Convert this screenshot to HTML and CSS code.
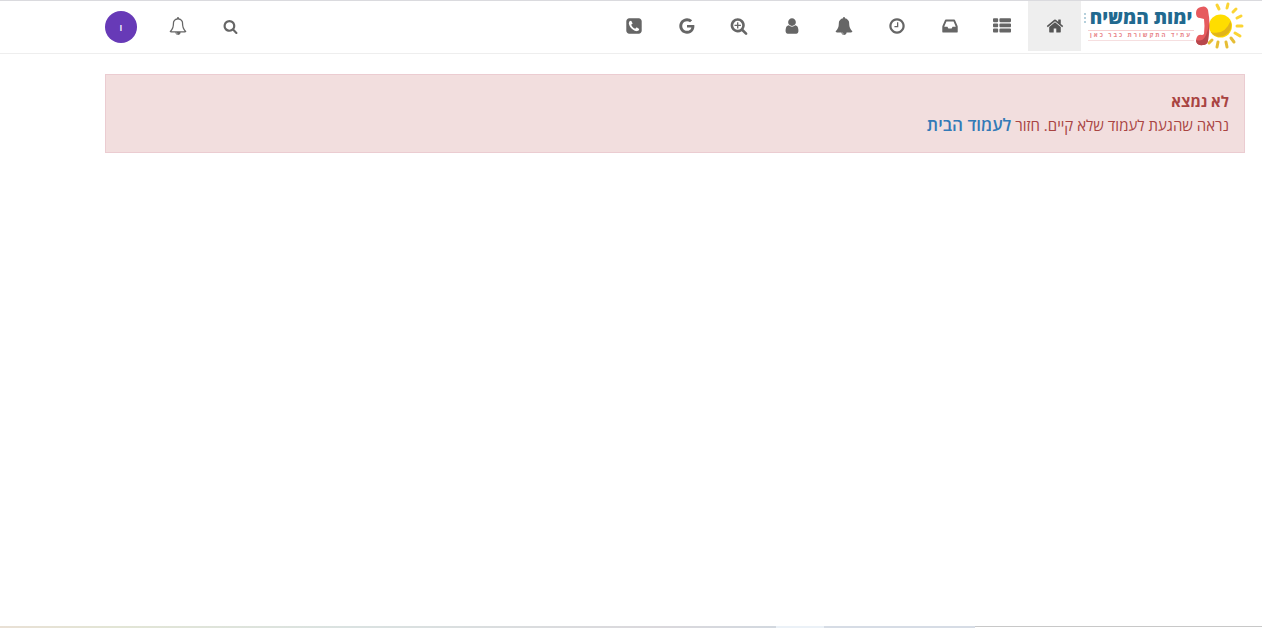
FILE: index.html
```html
<!DOCTYPE html>
<html lang="he" dir="rtl">
<head>
  <meta charset="UTF-8">
  <meta name="viewport" content="width=device-width, initial-scale=1.0">
  <title>לא נמצא</title>
  <link rel="stylesheet" href="styles.css">
</head>
<body>
  <header class="navbar">
    <a class="brand" href="#">
      <svg class="brand-mark" viewBox="0 0 50 50" aria-hidden="true">
        <!-- Sun -->
        <circle cx="25.500" cy="25" r="11.500" fill="#fd0"/>
        <path d="M35.500 20a11.500 11.500 0 0 1-20 11q14 4 20-11z" fill="#e2b51a"/>
        <g stroke="#fbd433" stroke-width="3" stroke-linecap="round">
          <path d="M22 4l2 4M33 3l-1 4M41 8l-3 3M46 15l-4 2M42 25h5M40 32l5 3"/>
          <path d="M36 37l3 4M31 41l1 5M23 41l-1 5M17 39l-3 3" stroke="#e6bd35"/>
        </g>
        <!-- Handset -->
        <path d="M6 6q5-2 7 3c2 10 2 21 0 31q-1 4-5 4-7 1-7-5 1-6 6-5 1 0 2-1 1-8 0-15l-4-1q-4 0-4-5 0-5 5-6z" fill="#e65a5e"/>
        <path d="M14 22q0 9-1 18-1 4-5 4-7 1-7-5 6 2 9-3 3-5 4-14z" fill="#b7474c"/>
      </svg>
      <span class="brand-text">
        <span class="brand-name">ימות המשיח</span>
        <span class="brand-tagline">עתיד התקשורת כבר כאן</span>
      </span>
      <svg class="brand-side" viewBox="0 0 3 12" aria-hidden="true">
        <path d="M1 1v2M1 5v2M1 9v2" stroke="#b5d0dc" stroke-width="2"/>
      </svg>
    </a>

    <nav class="main-nav">
      <a class="nav-link active" href="#" aria-label="בית">
        <svg class="icon" viewBox="0 0 1792 1792"><path d="M1472 992v480q0 26-19 45t-45 19h-384v-384h-256v384h-384q-26 0-45-19t-19-45v-480q0-1 .5-3t.5-3l575-474 575 474q1 2 1 6zm223-69l-62 74q-8 9-21 11h-3q-13 0-21-7l-692-577-692 577q-12 8-24 7-13-2-21-11l-62-74q-8-10-7-23.5t11-21.5l719-599q32-26 76-26t76 26l244 204v-195q0-14 9-23t23-9h192q14 0 23 9t9 23v408l219 182q10 8 11 21.5t-7 23.5z"/></svg>
      </a>
      <a class="nav-link" href="#" aria-label="קטגוריות">
        <svg class="icon" viewBox="0 0 1792 1792"><path d="M512 1248v192q0 40-28 68t-68 28h-320q-40 0-68-28t-28-68v-192q0-40 28-68t68-28h320q40 0 68 28t28 68zm0-512v192q0 40-28 68t-68 28h-320q-40 0-68-28t-28-68v-192q0-40 28-68t68-28h320q40 0 68 28t28 68zm1280 512v192q0 40-28 68t-68 28h-960q-40 0-68-28t-28-68v-192q0-40 28-68t68-28h960q40 0 68 28t28 68zm-1280-1024v192q0 40-28 68t-68 28h-320q-40 0-68-28t-28-68v-192q0-40 28-68t68-28h320q40 0 68 28t28 68zm1280 512v192q0 40-28 68t-68 28h-960q-40 0-68-28t-28-68v-192q0-40 28-68t68-28h960q40 0 68 28t28 68zm0-512v192q0 40-28 68t-68 28h-960q-40 0-68-28t-28-68v-192q0-40 28-68t68-28h960q40 0 68 28t28 68z"/></svg>
      </a>
      <a class="nav-link" href="#" aria-label="לא נקראו">
        <svg class="icon" viewBox="0 0 1792 1792"><path d="M1151 960h316q-1-3-2.5-8.5t-2.5-7.5l-212-496h-708l-212 496q-1 3-2.5 8.5t-2.5 7.5h316l95 192h320zm513 30v482q0 26-19 45t-45 19h-1408q-26 0-45-19t-19-45v-482q0-62 25-123l238-552q10-25 36.5-42t52.5-17h832q26 0 52.5 17t36.5 42l238 552q25 61 25 123z"/></svg>
      </a>
      <a class="nav-link" href="#" aria-label="פוסטים אחרונים">
        <svg class="icon" viewBox="0 0 1792 1792"><path d="M1024 544v448q0 14-9 23t-23 9h-320q-14 0-23-9t-9-23v-64q0-14 9-23t23-9h224v-352q0-14 9-23t23-9h64q14 0 23 9t9 23zm416 352q0-148-73-273t-198-198-273-73-273 73-198 198-73 273 73 273 198 198 273 73 273-73 198-198 73-273zm224 0q0 209-103 385.5t-279.5 279.5-385.5 103-385.5-103-279.5-279.5-103-385.5 103-385.5 279.5-279.5 385.5-103 385.5 103 279.5 279.5 103 385.5z"/></svg>
      </a>
      <a class="nav-link" href="#" aria-label="עדכונים">
        <svg class="icon" viewBox="0 0 1792 1792"><path fill-rule="evenodd" d="M912 1696q0-16-16-16-59 0-101.5-42.5t-42.5-101.5q0-16-16-16t-16 16q0 73 51.5 124.5t124.5 51.5q16 0 16-16zm816-288q0 52-38 90t-90 38h-448q0 106-75 181t-181 75-181-75-75-181h-448q-52 0-90-38t-38-90q50-42 91-88t85-119.5 74.5-158.5 50-206 19.5-260q0-152 117-282.5t307-158.5q-8-19-8-39 0-40 28-68t68-28 68 28 28 68q0 20-8 39 190 28 307 158.5t117 282.5q0 139 19.5 260t50 206 74.5 158.5 85 119.5 91 88z"/></svg>
      </a>
      <a class="nav-link" href="#" aria-label="משתמשים">
        <svg class="icon" viewBox="0 0 1792 1792"><path d="M1536 1399q0 109-62.5 187t-150.5 78h-854q-88 0-150.5-78t-62.5-187q0-85 8.5-160.5t31.5-152 58.5-131 94-89 134.5-34.5q131 128 313 128t313-128q76 0 134.5 34.5t94 89 58.5 131 31.5 152 8.5 160.5zm-256-887q0 159-112.5 271.5t-271.5 112.5-271.5-112.5-112.5-271.5 112.5-271.5 271.5-112.5 271.5 112.5 112.5 271.5z"/></svg>
      </a>
      <a class="nav-link" href="#" aria-label="חיפוש מתקדם">
        <svg class="icon" viewBox="0 0 1792 1792"><path d="M1088 800v64q0 13-9.5 22.5t-22.5 9.5h-224v224q0 13-9.5 22.5t-22.5 9.5h-64q-13 0-22.5-9.5t-9.5-22.5v-224h-224q-13 0-22.5-9.5t-9.5-22.5v-64q0-13 9.5-22.5t22.5-9.5h224v-224q0-13 9.5-22.5t22.5-9.5h64q13 0 22.5 9.5t9.5 22.5v224h224q13 0 22.5 9.5t9.5 22.5zm128 32q0-185-131.5-316.5t-316.5-131.5-316.5 131.5-131.5 316.5 131.5 316.5 316.5 131.5 316.5-131.5 131.5-316.5zm512 832q0 53-37.5 90.5t-90.5 37.5q-54 0-90-38l-343-342q-179 124-399 124-143 0-273.5-55.5t-225-150-150-225-55.5-273.5 55.5-273.5 150-225 225-150 273.5-55.5 273.5 55.5 225 150 150 225 55.5 273.5q0 220-124 399l343 343q37 37 37 90z"/></svg>
      </a>
      <a class="nav-link" href="#" aria-label="חיפוש בגוגל">
        <svg class="icon" viewBox="0 0 1792 1792"><path d="M896 786h725q12 67 12 128 0 217-91 387.5t-259.5 266.5-386.5 96q-157 0-299-60.5t-245-163.5-163.5-245-60.5-299 60.5-299 163.5-245 245-163.5 299-60.5q300 0 515 201l-209 201q-123-119-306-119-129 0-238.5 65t-173.5 176.5-64 243.5 64 243.5 173.5 176.5 238.5 65q87 0 160-24t120-60 82-82 51.5-87 22.5-78h-436v-264z"/></svg>
      </a>
      <a class="nav-link" href="#" aria-label="טלפון">
        <svg class="icon" viewBox="0 0 1792 1792"><path d="M1408 1193q0-11-2-16t-18-16.5-40.5-25-47.5-26.5-45.5-25-28.5-15q-5-3-19-13t-25-15-21-5q-15 0-36.5 20.5t-39.5 45-38.5 45-33.5 20.5q-7 0-16.5-3.5t-15.5-6.5-17-9.5-14-8.5q-99-55-170-126.5t-127-170.5q-2-3-8.5-14t-9.5-17-6.5-15.5-3.5-16.5q0-13 20.5-33.5t45-38.5 45-39.5 20.5-36.5q0-10-5-21t-15-25-13-19q-3-6-15-28.5t-25-45.5-26.5-47.5-25-40.5-16.5-18-16-2q-48 0-101 22-46 21-80 94.5t-34 130.5q0 16 2.5 34t5 30.5 9 33 10 29.5 12.5 33 11 30q60 164 216.5 320.5t320.5 216.5q6 2 30 11t33 12.5 29.5 10 33 9 30.5 5 34 2.5q57 0 130.5-34t94.5-80q22-53 22-101zm256-777v960q0 119-84.5 203.5t-203.5 84.5h-960q-119 0-203.5-84.5t-84.5-203.5v-960q0-119 84.5-203.5t203.5-84.5h960q119 0 203.5 84.5t84.5 203.5z"/></svg>
      </a>
    </nav>

    <div class="user-nav">
      <button class="nav-button" type="button" aria-label="חיפוש">
        <svg class="icon icon-small" viewBox="0 0 1792 1792"><path d="M1216 832q0-185-131.5-316.5t-316.5-131.5-316.5 131.5-131.5 316.5 131.5 316.5 316.5 131.5 316.5-131.5 131.5-316.5zm512 832q0 52-38 90t-90 38q-54 0-90-38l-343-342q-179 124-399 124-143 0-273.5-55.5t-225-150-150-225-55.5-273.5 55.5-273.5 150-225 225-150 273.5-55.5 273.5 55.5 225 150 150 225 55.5 273.5q0 220-124 399l343 343q37 37 37 90z"/></svg>
      </button>
      <button class="nav-button" type="button" aria-label="התראות">
        <svg class="icon" viewBox="0 0 1792 1792"><path fill-rule="evenodd" d="M912 1696q0-16-16-16-59 0-101.5-42.5t-42.5-101.5q0-16-16-16t-16 16q0 73 51.5 124.5t124.5 51.5q16 0 16-16zM246 1408h1300q-266-300-266-832 0-51-24-105t-69-103-121.5-80-169.5-31-169.5 31-121.5 80-69 103-24 105q0 532-266 832zM1728 1408q0 52-38 90t-90 38h-448q0 106-75 181t-181 75-181-75-75-181h-448q-52 0-90-38t-38-90q50-42 91-88t85-119.5 74.5-158.5 50-206 19.5-260q0-152 117-282.5t307-158.5q-8-19-8-39 0-40 28-68t68-28 68 28 28 68q0 20-8 39 190 28 307 158.5t117 282.5q0 139 19.5 260t50 206 74.5 158.5 85 119.5 91 88z"/></svg>
      </button>
      <button class="avatar" type="button">ו</button>
    </div>
  </header>

  <main class="content">
    <div class="alert">
      <strong>לא נמצא</strong>
      <p>נראה שהגעת לעמוד שלא קיים. חזור <a class="alert-link" href="#">לעמוד הבית</a></p>
    </div>
  </main>

  <footer class="bottom-strip">
    <span class="strip-line"></span>
    <span class="strip-blue"></span>
    <span class="strip-pale"></span>
    <span class="strip-fade"></span>
  </footer>
</body>
</html>
```
FILE: styles.css
```css
:root {
  --icon: #666;
  --border: #eee;
  --danger-bg: #f2dede;
  --danger-border: #ebccd1;
  --danger: #a94442;
  --link: #337ab7;
}

* {
  margin: 0;
  padding: 0;
  box-sizing: border-box;
}

body {
  display: flex;
  flex-direction: column;
  min-height: 100vh;
  background-color: #fff;
  color: #333;
  font-family: "Open Sans", "Noto Sans", sans-serif;
  font-size: 15px;
  line-height: 24px;
}

a {
  color: var(--link);
  text-decoration: none;
}

.navbar {
  display: flex;
  align-items: flex-start;
  padding: 0 17px 0 105px;
  border-top: 1px solid #dadade;
  border-bottom: 1px solid var(--border);
}

/* Logo */
.brand {
  display: flex;
  align-items: flex-start;
  justify-content: space-between;
  width: 164px;
  height: 50px;
  padding-left: 3px;
}

.brand-mark {
  flex: none;
  width: 50px;
  height: 50px;
}

.brand-text {
  display: flex;
  flex-direction: column;
  align-items: center;
  padding-top: 4px;
  white-space: nowrap;
}

.brand-name {
  color: #21698f;
  font-size: 19px;
  font-weight: 800;
  line-height: 25px;
}

.brand-tagline {
  width: 106px;
  border-top: 1px solid #f6cfd0;
  border-bottom: 1px solid #f6dfe0;
  color: #e88488;
  font-size: 6px;
  font-weight: 700;
  line-height: 9px;
  letter-spacing: 2px;
  text-align: center;
}

.brand-side {
  width: 3px;
  height: 12px;
  margin-top: 11px;
}

/* Navigation */
.main-nav {
  display: flex;
  width: 473px;
}

.nav-link {
  display: flex;
  flex: 1;
  align-items: center;
  justify-content: center;
  height: 50px;
}

.nav-link.active {
  background-color: #eee;
}

.nav-link.active .icon {
  fill: #555;
}

.icon {
  width: 18px;
  height: 18px;
  fill: var(--icon);
}

.icon-small {
  width: 15px;
  height: 15px;
}

.user-nav {
  display: flex;
  align-items: flex-start;
  height: 52px;
  margin-right: auto;
}

.nav-button {
  display: flex;
  align-items: center;
  justify-content: center;
  width: 52px;
  height: 50px;
  border: none;
  background: none;
  cursor: pointer;
}

.avatar {
  width: 32px;
  height: 32px;
  margin-top: 10px;
  margin-right: 15px;
  border: none;
  border-radius: 50%;
  background-color: #673ab7;
  color: #fff;
  font-family: inherit;
  font-size: 10px;
  font-weight: 600;
  cursor: pointer;
}

/* Error message */
.content {
  padding: 20px 17px 20px 105px;
}

.alert {
  padding: 14px 15px 15px;
  border: 1px solid var(--danger-border);
  background-color: var(--danger-bg);
  color: var(--danger);
}

.alert-link {
  font-size: 17px;
  font-weight: 600;
}

/* Thin strip along the bottom edge */
.bottom-strip {
  display: flex;
  height: 2px;
  margin-top: auto;
}

.strip-line {
  width: 287px;
  border-top: 1px solid #c8c8c8;
}

.strip-blue {
  width: 151px;
  background-color: #d6dce5;
}

.strip-pale {
  width: 48px;
  background-color: #ebf1f7;
}

.strip-fade {
  flex: 1;
  background: linear-gradient(to right, #e9e0d5, #e2e5d5 15%, #dae2e1 45%, #dad8dc 85%, #d2d8df);
}
```
